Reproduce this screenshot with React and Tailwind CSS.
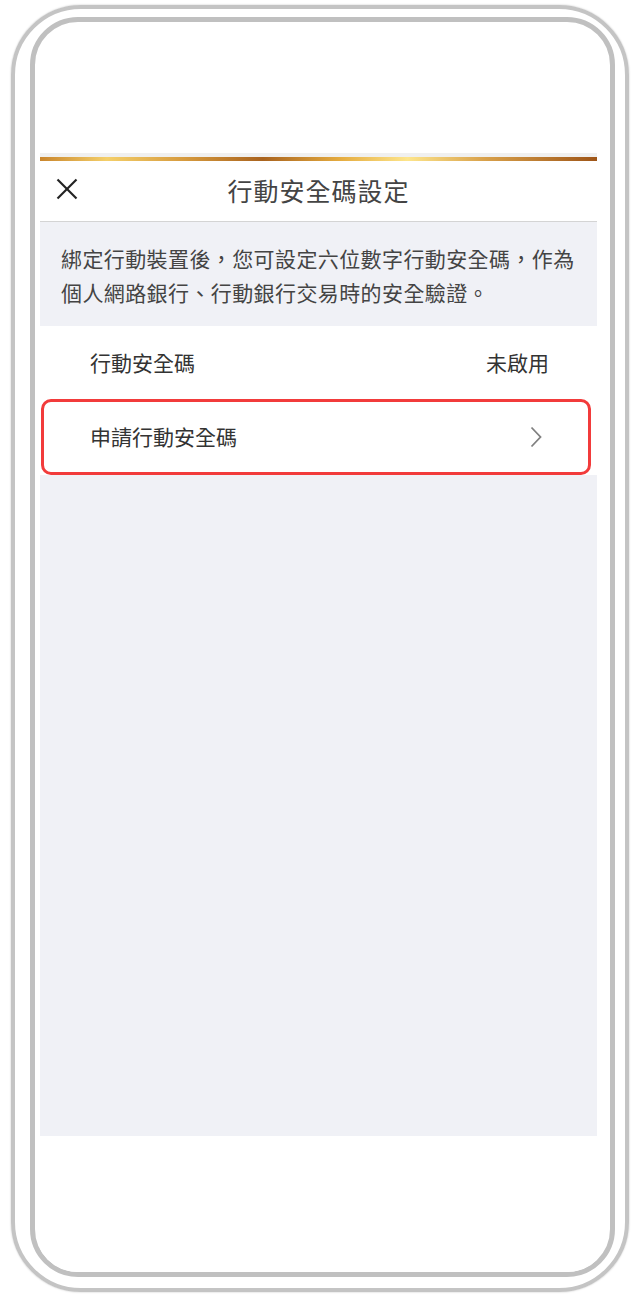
import React from "react";

const cjk = { fontFamily: '"Noto Sans CJK TC", "Noto Sans CJK SC", "Noto Sans", sans-serif' };

export default function App() {
  return (
    <div className="w-[636px] h-[1295px] bg-white overflow-hidden" style={cjk}>
      <div className="ml-[11px] mt-[5px] w-[618px] h-[1287px] rounded-[70px] border-[4px] border-[#c4c4c4] shadow-[0_0_2px_rgba(0,0,0,0.25)] pl-[15px] pt-[8px]">
        <div className="w-[585px] h-[1260px] rounded-[48px] border-[5px] border-[#c0c0c0] overflow-hidden bg-white pl-[5px] pr-[13px] flex flex-col">
          <div className="h-[131px] shrink-0" />
          <div className="h-[4px] shrink-0 bg-[#f0f0f0]" />
          <div
            className="h-[4px] shrink-0 bg-[linear-gradient(90deg,#c9852c_0%,#f4cf6a_12%,#d69a3e_26%,#a9631f_40%,#e5ac40_54%,#fde58c_66%,#d8a04a_80%,#9e5518_100%)]"
          />
          <div className="h-[61px] shrink-0 border-b border-[#d4d4d4] relative flex items-center justify-center">
            <svg className="absolute left-[16px] top-[17px]" width="22" height="22" viewBox="0 0 22 22">
              <line x1="1.5" y1="1.5" x2="20.5" y2="20.5" stroke="#222" strokeWidth="2.2" />
              <line x1="20.5" y1="1.5" x2="1.5" y2="20.5" stroke="#222" strokeWidth="2.2" />
            </svg>
            <span className="text-[25px] tracking-[1px] text-[#444] leading-none mt-[-2px]">行動安全碼設定</span>
          </div>
          <div className="h-[104px] shrink-0 bg-[#f0f1f6] pl-[21px] pt-[19px] text-[21px] leading-[34px] tracking-[0.4px] text-[#444] whitespace-nowrap">
            綁定行動裝置後，您可設定六位數字行動安全碼，作為
            <br />
            個人網路銀行、行動銀行交易時的安全驗證。
          </div>
          <div className="h-[73px] shrink-0 bg-white flex items-center justify-between pl-[50px] pr-[48px] text-[21px] text-[#333]">
            <span>行動安全碼</span>
            <span>未啟用</span>
          </div>
          <div className="h-[76px] shrink-0 bg-white relative flex items-center justify-between pl-[50px] pr-[55px] text-[21px] text-[#333]">
            <span>申請行動安全碼</span>
            <svg width="12" height="22" viewBox="0 0 12 22">
              <polyline points="1.5,1.5 10.5,11 1.5,20.5" fill="none" stroke="#808080" strokeWidth="1.8" />
            </svg>
            <div className="absolute left-[1px] top-0 w-[550px] h-[76px] border-[3px] border-[#f23b3b] rounded-[10px]" />
          </div>
          <div className="h-[661px] shrink-0 bg-[#f0f1f6]" />
          <div className="flex-1 bg-white" />
        </div>
      </div>
    </div>
  );
}
